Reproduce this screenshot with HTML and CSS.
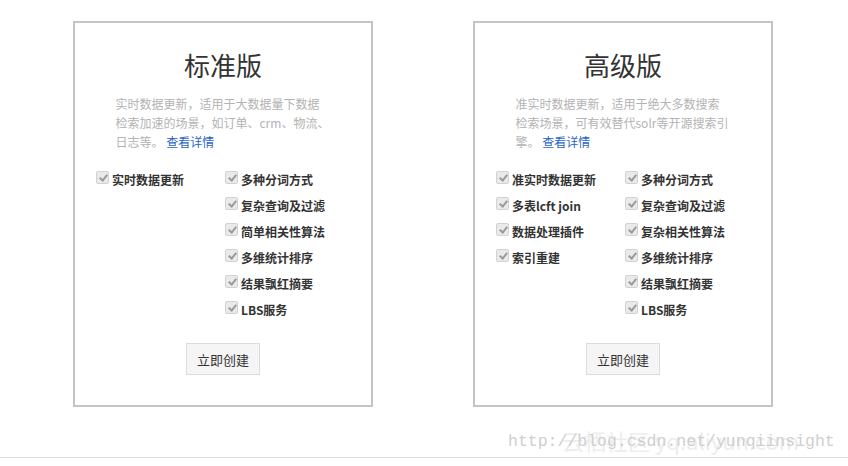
FILE: index.html
```html
<!DOCTYPE html>
<html lang="zh">
<head>
<meta charset="utf-8">
<link rel="stylesheet" href="styles.css">
</head>
<body>
<div class="page">
  <div class="cards">
    <div class="card">
      <h2 class="title">标准版</h2>
      <p class="desc">实时数据更新，适用于大数据量下数据检索加速的场景，如订单、crm、物流、日志等。 <a class="more" href="#">查看详情</a></p>
      <div class="features">
        <ul class="col">
          <li><span class="cb"></span>实时数据更新</li>
        </ul>
        <ul class="col">
          <li><span class="cb"></span>多种分词方式</li>
          <li><span class="cb"></span>复杂查询及过滤</li>
          <li><span class="cb"></span>简单相关性算法</li>
          <li><span class="cb"></span>多维统计排序</li>
          <li><span class="cb"></span>结果飘红摘要</li>
          <li><span class="cb"></span>LBS服务</li>
        </ul>
      </div>
      <button class="btn">立即创建</button>
    </div>
    <div class="card">
      <h2 class="title">高级版</h2>
      <p class="desc">准实时数据更新，适用于绝大多数搜索检索场景，可有效替代solr等开源搜索引擎。 <a class="more" href="#">查看详情</a></p>
      <div class="features">
        <ul class="col">
          <li><span class="cb"></span>准实时数据更新</li>
          <li><span class="cb"></span>多表lcft join</li>
          <li><span class="cb"></span>数据处理插件</li>
          <li><span class="cb"></span>索引重建</li>
        </ul>
        <ul class="col">
          <li><span class="cb"></span>多种分词方式</li>
          <li><span class="cb"></span>复杂查询及过滤</li>
          <li><span class="cb"></span>复杂相关性算法</li>
          <li><span class="cb"></span>多维统计排序</li>
          <li><span class="cb"></span>结果飘红摘要</li>
          <li><span class="cb"></span>LBS服务</li>
        </ul>
      </div>
      <button class="btn">立即创建</button>
    </div>
  </div>
  <div class="rule"></div>
  <div class="watermark">
    <span class="wm-logo">云栖社区 yq.aliyun.com</span>
    <span class="wm-url">http://blog.csdn.net/yunqiinsight</span>
  </div>
</div>
</body>
</html>
```
FILE: styles.css
```css
* { box-sizing: border-box; }
html, body { margin: 0; padding: 0; background: #fff; }
body {
  font-family: "Open Sans", "Noto Sans CJK SC", sans-serif;
  color: #333;
}
.page {
  position: relative;
  width: 848px;
  height: 466px;
  overflow: hidden;
}
.cards {
  display: flex;
  gap: 100px;
  padding: 21px 0 0 73px;
}
.card {
  width: 300px;
  height: 386px;
  border: 2px solid #c4c4c4;
  padding: 24px 0 0 0;
  display: flex;
  flex-direction: column;
  align-items: center;
}
.title {
  margin: 0;
  font-family: "Noto Sans CJK SC", sans-serif;
  font-weight: 400;
  font-size: 26px;
  line-height: 36px;
  color: #333;
}
.desc {
  margin: 11px 0 0 0;
  width: 215px;
  font-family: "Noto Sans CJK SC", sans-serif;
  font-size: 12px;
  line-height: 19px;
  color: #b3b3b3;
  text-align: left;
  line-break: loose;
}
.more { color: #2a65c6; text-decoration: none; }
.features {
  align-self: stretch;
  display: flex;
  margin-top: 15px;
  padding-left: 21px;
}
.col {
  list-style: none;
  margin: 0;
  padding: 0;
  width: 129px;
}
.col li {
  display: flex;
  align-items: center;
  height: 26px;
  font-family: "Noto Sans CJK SC", sans-serif;
  font-weight: 700;
  font-size: 12px;
  color: #333;
}
.cb {
  width: 13px;
  height: 13px;
  margin-right: 3px;
  margin-top: -3px;
  border: 1px solid #d2d2d2;
  border-radius: 2px;
  background: #eaeaea;
  position: relative;
  flex: none;
}
.cb::after {
  content: "";
  position: absolute;
  left: 4px;
  top: 1px;
  width: 3px;
  height: 6px;
  border: solid #9a9a9a;
  border-width: 0 2px 2px 0;
  transform: rotate(40deg);
}
.btn {
  margin-top: 21px;
  width: 74px;
  height: 32px;
  background: #f5f5f5;
  border: 1px solid #dcdcdc;
  font-family: "Noto Sans CJK SC", sans-serif;
  font-size: 13px;
  color: #333;
  padding: 0;
}
.rule {
  position: absolute;
  left: 0;
  right: 0;
  top: 457px;
  height: 1px;
  background: #dcdcdc;
}
.watermark {
  position: absolute;
  left: 508px;
  top: 426px;
  width: 340px;
  height: 30px;
}
.wm-url {
  position: absolute;
  left: 0;
  top: 6px;
  font-family: "Liberation Mono", monospace;
  font-size: 16.5px;
  line-height: 20px;
  color: #cfcfcf;
  white-space: nowrap;
}
.wm-logo {
  position: absolute;
  left: 54px;
  top: 0;
  font-family: "Noto Sans CJK SC", sans-serif;
  font-size: 22px;
  line-height: 28px;
  color: #ededed;
  white-space: nowrap;
}
```
